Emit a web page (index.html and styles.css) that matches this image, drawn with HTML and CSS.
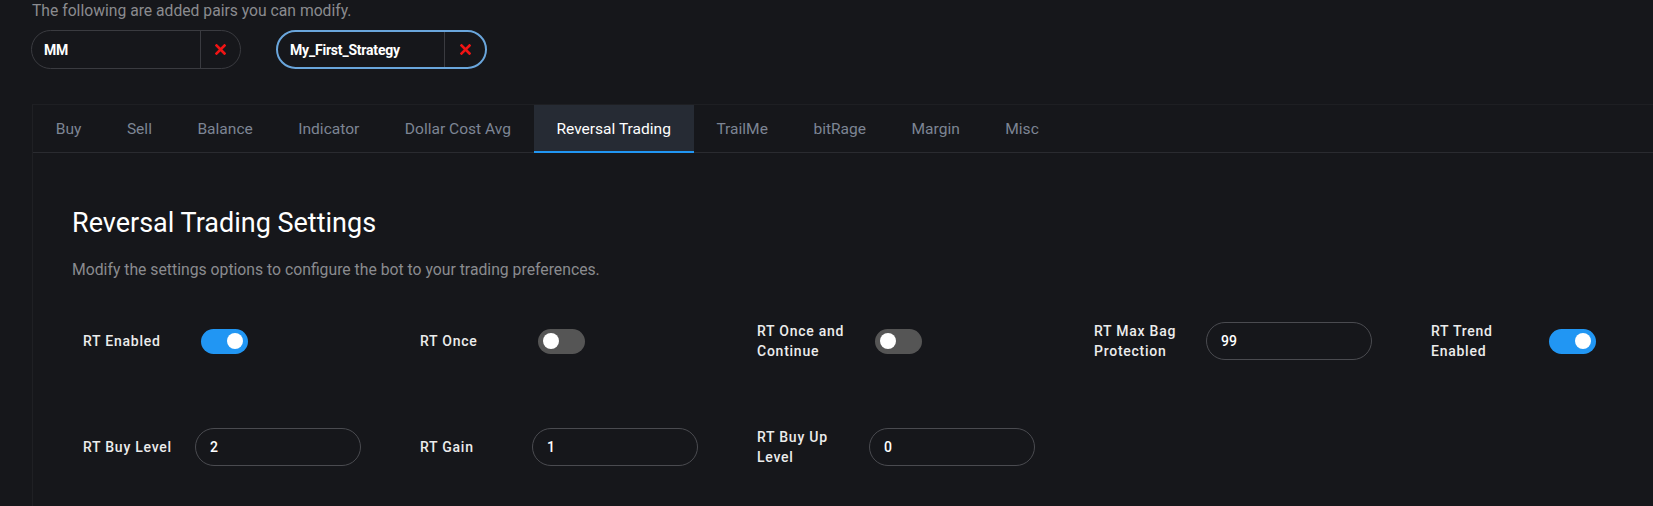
FILE: index.html
```html
<!DOCTYPE html>
<html lang="en">
<head>
<meta charset="utf-8">
<title>Reversal Trading Settings</title>
<link rel="stylesheet" href="styles.css">
</head>
<body>
<p class="pairs-note">The following are added pairs you can modify.</p>
<div class="pairs">
  <div class="pill">
    <span class="pill-name">MM</span>
    <span class="pill-del"><svg width="11" height="11" viewBox="0 0 11 11"><path d="M1.5 1.5 L9.5 9.5 M9.5 1.5 L1.5 9.5" stroke="#f01414" stroke-width="2.6" stroke-linecap="square"/></svg></span>
  </div>
  <div class="pill pill-active">
    <span class="pill-name">My_First_Strategy</span>
    <span class="pill-del"><svg width="11" height="11" viewBox="0 0 11 11"><path d="M1.5 1.5 L9.5 9.5 M9.5 1.5 L1.5 9.5" stroke="#f01414" stroke-width="2.6" stroke-linecap="square"/></svg></span>
  </div>
</div>

<div class="panel">
  <nav class="tabs">
    <span class="tab">Buy</span>
    <span class="tab">Sell</span>
    <span class="tab">Balance</span>
    <span class="tab">Indicator</span>
    <span class="tab">Dollar Cost Avg</span>
    <span class="tab tab-active">Reversal Trading</span>
    <span class="tab">TrailMe</span>
    <span class="tab">bitRage</span>
    <span class="tab">Margin</span>
    <span class="tab">Misc</span>
  </nav>
  <section class="content">
    <h2 class="title">Reversal Trading Settings</h2>
    <p class="desc">Modify the settings options to configure the bot to your trading preferences.</p>
    <div class="grid">
      <div class="field"><span class="label">RT Enabled</span><span class="toggle on"><span class="knob"></span></span></div>
      <div class="field"><span class="label">RT Once</span><span class="toggle"><span class="knob"></span></span></div>
      <div class="field"><span class="label">RT Once and Continue</span><span class="toggle"><span class="knob"></span></span></div>
      <div class="field"><span class="label">RT Max Bag Protection</span><input class="num" type="text" value="99"></div>
      <div class="field"><span class="label">RT Trend Enabled</span><span class="toggle on"><span class="knob"></span></span></div>
      <div class="field"><span class="label">RT Buy Level</span><input class="num" type="text" value="2"></div>
      <div class="field"><span class="label">RT Gain</span><input class="num" type="text" value="1"></div>
      <div class="field"><span class="label">RT Buy Up Level</span><input class="num" type="text" value="0"></div>
    </div>
  </section>
</div>
</body>
</html>
```
FILE: styles.css
```css
html, body {
  margin: 0;
  padding: 0;
  background: #16171b;
  font-family: Roboto, "Noto Sans", sans-serif;
  overflow: hidden;
  height: 100%;
}

.pairs-note {
  margin: 0;
  padding-left: 32px;
  font-size: 15.7px;
  line-height: 22px;
  color: #8a8b8f;
}

.pairs {
  display: flex;
  gap: 35px;
  margin-top: 8px;
  padding-left: 31px;
}

.pill {
  box-sizing: border-box;
  width: 210px;
  height: 39px;
  border: 1px solid #3a3b40;
  border-radius: 20px;
  display: flex;
  align-items: stretch;
}

.pill-active {
  width: 211px;
  border: 2px solid #6aa6dc;
}

.pill-name {
  flex: 1;
  display: flex;
  align-items: center;
  padding-left: 12px;
  color: #ffffff;
  font-size: 14px;
  font-weight: 700;
  letter-spacing: -0.2px;
}

.pill-del {
  width: 39px;
  border-left: 1px solid #3a3b40;
  display: flex;
  align-items: center;
  justify-content: center;
}

.pill-active .pill-del {
  width: 40px;
}

.panel {
  margin-top: 35px;
  margin-left: 32px;
  border-left: 1px solid #1f2024;
  border-top: 1px solid #1e1f23;
  min-height: 420px;
}

.tabs {
  display: flex;
  height: 47px;
  border-bottom: 1px solid #2a2b30;
}

.tab {
  display: flex;
  align-items: center;
  padding: 0 22.75px;
  font-size: 15.55px;
  color: #7d8594;
}

.tab-active {
  background: #262b34;
  color: #ffffff;
  box-shadow: inset 0 -2px 0 #2196f3;
  margin-bottom: -1px;
}

.content {
  padding: 54px 0 0 39px;
}

.title {
  margin: 0;
  font-size: 27px;
  line-height: 32px;
  font-weight: 400;
  color: #ffffff;
}

.desc {
  margin: 21px 0 0 0;
  font-size: 15.75px;
  line-height: 20px;
  color: #8a8b8f;
}

.grid {
  display: grid;
  grid-template-columns: repeat(4, 337px) auto;
  row-gap: 66px;
  margin-top: 41px;
}

.field {
  display: flex;
  align-items: center;
  min-height: 40px;
  padding-left: 11px;
}

.label {
  width: 100px;
  margin-right: 12px;
  font-size: 14px;
  font-weight: 500;
  letter-spacing: 0.75px;
  line-height: 20px;
  color: #ececec;
}

.toggle {
  box-sizing: border-box;
  width: 47px;
  height: 25px;
  margin-left: 6px;
  border-radius: 13px;
  background: #555555;
  display: flex;
  align-items: center;
  padding: 0 5px;
  justify-content: flex-start;
}

.toggle.on {
  background: #2196f3;
  justify-content: flex-end;
}

.knob {
  width: 16px;
  height: 16px;
  border-radius: 50%;
  background: #ffffff;
}

.num {
  box-sizing: border-box;
  width: 166px;
  height: 38px;
  border: 1px solid #4a4b50;
  border-radius: 19px;
  background: transparent;
  padding: 0 14px;
  font-family: Roboto, "Noto Sans", sans-serif;
  font-size: 14px;
  font-weight: 500;
  color: #ffffff;
  outline: none;
}
```
